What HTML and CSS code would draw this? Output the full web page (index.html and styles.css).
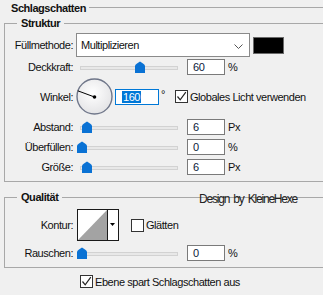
FILE: index.html
```html
<!DOCTYPE html>
<html lang="de">
<head>
  <meta charset="UTF-8">
  <title>Schlagschatten</title>
  <link rel="stylesheet" href="styles.css">
</head>
<body>

  <div class="head">
    <span class="head-title">Schlagschatten</span>
    <span class="head-line"></span>
  </div>

  <div class="group group-struktur">
    <span class="group-title">Struktur</span>

    <div class="row row-mode">
      <span class="lbl">Füllmethode:</span>
      <div class="select">
        <span>Multiplizieren</span>
        <svg class="chevron" width="9" height="5" viewBox="0 0 9 5"><path d="M0.5 0.5 L4.5 4.5 L8.5 0.5" fill="none" stroke="#555" stroke-width="1"/></svg>
      </div>
      <span class="swatch"></span>
    </div>

    <div class="row">
      <span class="lbl">Deckkraft:</span>
      <div class="slider">
        <span class="track"></span>
        <svg class="thumb" style="left: 59px" width="10" height="12" viewBox="0 0 10 12"><path d="M0 5 Q0 3.5 2 2.5 L5 0.5 L8 2.5 Q10 3.5 10 5 V12 H0 Z" fill="#0a72d4"/></svg>
      </div>
      <span class="field">60</span>
      <span class="unit">%</span>
    </div>

    <div class="row row-angle">
      <span class="lbl">Winkel:</span>
      <svg class="dial" width="37" height="37" viewBox="0 0 37 37">
        <defs>
          <radialGradient id="dialFill" cx="0.45" cy="0.4" r="0.6">
            <stop offset="0" stop-color="#ffffff"/>
            <stop offset="1" stop-color="#e4e4e6"/>
          </radialGradient>
        </defs>
        <circle cx="18.5" cy="18.5" r="17.5" fill="url(#dialFill)" stroke="#6f7689" stroke-width="1.4"/>
        <line x1="1.8" y1="12.8" x2="18.5" y2="19" stroke="#000" stroke-width="1"/>
        <circle cx="18.5" cy="19" r="1.8" fill="#000"/>
      </svg>
      <span class="field field-active"><span class="sel">160</span></span>
      <span class="deg">°</span>
      <span class="check checked">
        <svg width="11" height="11" viewBox="0 0 11 11"><path d="M1.5 5.5 L4.2 8.8 L9.8 1.2" fill="none" stroke="#222" stroke-width="1.2"/></svg>
      </span>
      <span class="check-text">Globales Licht verwenden</span>
    </div>

    <div class="row row-gap">
      <span class="lbl">Abstand:</span>
      <div class="slider">
        <span class="track"></span>
        <svg class="thumb" style="left: 6px" width="10" height="12" viewBox="0 0 10 12"><path d="M0 5 Q0 3.5 2 2.5 L5 0.5 L8 2.5 Q10 3.5 10 5 V12 H0 Z" fill="#0a72d4"/></svg>
      </div>
      <span class="field">6</span>
      <span class="unit">Px</span>
    </div>

    <div class="row row-gap">
      <span class="lbl">Überfüllen:</span>
      <div class="slider">
        <span class="track"></span>
        <svg class="thumb" style="left: 1px" width="10" height="12" viewBox="0 0 10 12"><path d="M0 5 Q0 3.5 2 2.5 L5 0.5 L8 2.5 Q10 3.5 10 5 V12 H0 Z" fill="#0a72d4"/></svg>
      </div>
      <span class="field">0</span>
      <span class="unit">%</span>
    </div>

    <div class="row row-gap">
      <span class="lbl">Größe:</span>
      <div class="slider">
        <span class="track"></span>
        <svg class="thumb" style="left: 6px" width="10" height="12" viewBox="0 0 10 12"><path d="M0 5 Q0 3.5 2 2.5 L5 0.5 L8 2.5 Q10 3.5 10 5 V12 H0 Z" fill="#0a72d4"/></svg>
      </div>
      <span class="field">6</span>
      <span class="unit">Px</span>
    </div>
  </div>

  <div class="group group-quality">
    <span class="group-title">Qualität</span>

    <div class="row row-contour">
      <span class="lbl">Kontur:</span>
      <svg class="contour" width="42" height="32" viewBox="0 0 42 32">
        <rect x="0.5" y="0.5" width="41" height="31" fill="#fff" stroke="#1a1a1a"/>
        <polygon points="1,31 30,1 30,31" fill="#a3a3a3"/>
        <line x1="30.5" y1="0.5" x2="30.5" y2="31.5" stroke="#1a1a1a"/>
        <polygon points="33,14 38,14 35.5,17" fill="#000"/>
      </svg>
      <span class="check check-smooth"></span>
      <span class="check-text">Glätten</span>
    </div>

    <div class="row row-gap">
      <span class="lbl">Rauschen:</span>
      <div class="slider">
        <span class="track"></span>
        <svg class="thumb" style="left: 1px" width="10" height="12" viewBox="0 0 10 12"><path d="M0 5 Q0 3.5 2 2.5 L5 0.5 L8 2.5 Q10 3.5 10 5 V12 H0 Z" fill="#0a72d4"/></svg>
      </div>
      <span class="field">0</span>
      <span class="unit">%</span>
    </div>
  </div>

  <div class="row row-knockout">
    <span class="check checked">
      <svg width="11" height="11" viewBox="0 0 11 11"><path d="M1.5 5.5 L4.2 8.8 L9.8 1.2" fill="none" stroke="#222" stroke-width="1.2"/></svg>
    </span>
    <span class="check-text">Ebene spart Schlagschatten aus</span>
  </div>

  <span class="watermark">Design by KleineHexe</span>

</body>
</html>
```

FILE: styles.css
```css
body {
  margin: 0;
  width: 323px;
  height: 295px;
  overflow: hidden;
  position: relative;
  background: #f0f0f0;
  color: #111;
  font-family: "Liberation Sans", Arial, sans-serif;
  font-size: 11px;
  letter-spacing: -0.45px;
  line-height: 14px;
}

.head {
  display: flex;
  align-items: center;
  height: 15px;
  margin-bottom: 8px;
  padding-left: 11px;
}

.head-title {
  font-weight: bold;
}

.head-line {
  flex: 1;
  border-top: 1px solid #a8a8a8;
  margin-left: 3px;
}

.group {
  position: relative;
  margin-left: 4px;
  margin-right: -10px;
  border: 1px solid #a8a8a8;
}

.group-struktur {
  padding: 9px 0 6px;
}

.group-quality {
  margin-top: 15px;
  padding: 11px 0 6px;
}

.group-title {
  position: absolute;
  top: -8px;
  left: 12px;
  padding: 0 4px;
  background: #f0f0f0;
  font-weight: bold;
}

.row {
  display: flex;
  align-items: center;
  height: 16px;
}

.lbl {
  width: 68px;
  flex-shrink: 0;
  text-align: right;
}

.row-mode {
  height: 24px;
  margin-bottom: 2px;
}

.select {
  box-sizing: border-box;
  display: flex;
  align-items: center;
  justify-content: space-between;
  width: 174px;
  height: 24px;
  margin-left: 3px;
  padding: 0 6px 0 4px;
  background: #fff;
  border: 1px solid #8a8a8a;
}

.chevron {
  margin-top: 2px;
}

.swatch {
  box-sizing: border-box;
  width: 31px;
  height: 17px;
  margin-left: 3px;
  background: #000;
  border: 1px solid #6a6a6a;
}

.slider {
  position: relative;
  width: 104px;
  height: 16px;
  margin-left: 3px;
}

.track {
  position: absolute;
  left: 4px;
  right: 2px;
  top: 7px;
  height: 2px;
  background: #e8e8e8;
  border: 1px solid #d2d2d2;
}

.thumb {
  position: absolute;
  top: 2px;
}

.field {
  box-sizing: border-box;
  width: 38px;
  height: 16px;
  margin-left: 7px;
  padding-left: 5px;
  background: #fff;
  border: 1px solid #7a7a7a;
  line-height: 14px;
  color: #0b1a3a;
}

.unit {
  margin-left: 3px;
}

.row-angle {
  height: 37px;
  margin-top: 3px;
}

.dial {
  margin-left: 3px;
}

.field-active {
  width: 44px;
  margin-left: 2px;
  padding-left: 6px;
  border-color: #0078d7;
}

.sel {
  display: inline-block;
  padding: 0 1px;
  background: #0078d7;
  color: #fff;
  line-height: 12px;
}

.deg {
  width: 4px;
  margin-left: 2px;
  align-self: flex-start;
  margin-top: 9px;
}

.check {
  box-sizing: border-box;
  display: flex;
  align-items: center;
  justify-content: center;
  width: 13px;
  height: 13px;
  margin-left: 10px;
  background: #fff;
  border: 1px solid #333;
}

.check-text {
  margin-left: 2px;
}

.row-gap {
  margin-top: 4px;
}

.row-contour {
  height: 32px;
}

.contour {
  margin-left: 4px;
}

.check-smooth {
  margin-left: 12px;
}

.row-knockout {
  height: 13px;
  margin-top: 7px;
  padding-left: 80px;
}

.row-knockout .check {
  margin-left: 0;
}

.watermark {
  position: absolute;
  left: 199px;
  top: 192px;
  font-size: 12px;
  letter-spacing: -1.2px;
  word-spacing: 2px;
  color: #222;
}
```
